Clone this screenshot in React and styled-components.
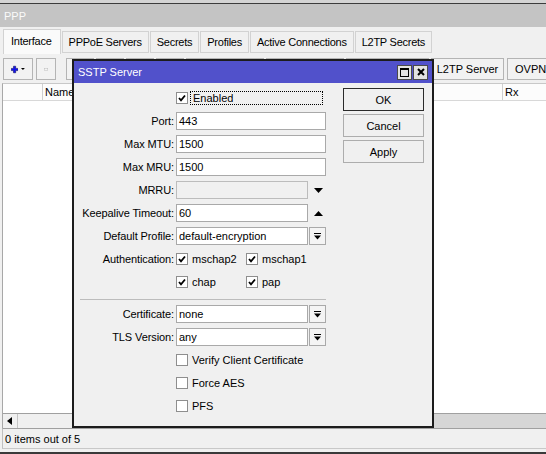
import React from 'react';
import styled, { createGlobalStyle } from 'styled-components';

const Global = createGlobalStyle`
  html, body { margin: 0; padding: 0; }
  body {
    font-family: "Liberation Sans", Arial, sans-serif;
    font-size: 11px;
    color: #000;
    background: #f0f0f0;
  }
  #root { width: 546px; height: 454px; }
`;

const Window = styled.div`
  position: relative;
  width: 546px;
  height: 454px;
  overflow: hidden;
  display: flex;
  flex-direction: column;
  background: #f0f0f0;
`;

const TopEdge = styled.div`
  flex: none;
  height: 3px;
  background: #d4d4d4;
  border-bottom: 1px solid #3c3c3c;
`;

const WinTitle = styled.div`
  flex: none;
  height: 23px;
  background: #c4c4c4;
  color: #fafafa;
  display: flex;
  align-items: center;
  padding-left: 4px;
`;

const TabRow = styled.div`
  flex: none;
  height: 27px;
  display: flex;
  align-items: flex-end;
  padding-left: 3px;
  gap: 1px;
  box-sizing: border-box;
`;

const Tab = styled.div`
  box-sizing: border-box;
  height: ${p => (p.$active ? '25px' : '22px')};
  margin-bottom: ${p => (p.$active ? '0' : '1px')};
  padding: ${p => (p.$active ? '0 8px 2px 7px' : '0 6px')};
  display: flex;
  align-items: center;
  border: 1px solid #d2d2d2;
  border-bottom: ${p => (p.$active ? 'none' : '1px solid #d2d2d2')};
  background: ${p => (p.$active ? '#fafafa' : '#f0f0f0')};
  letter-spacing: -0.25px;
  white-space: nowrap;
`;

const Toolbar = styled.div`
  flex: none;
  height: 29px;
  box-sizing: border-box;
  padding: 4px 0 0 3px;
  display: flex;
  align-items: flex-start;
  gap: 2px;
  white-space: nowrap;
`;

const ToolButton = styled.div`
  flex: none;
  box-sizing: border-box;
  height: 22px;
  width: ${p => (p.$w ? `${p.$w}px` : 'auto')};
  margin-left: ${p => p.$ml || 0}px;
  padding: 0 7px;
  border: 1px solid #b4b4b4;
  background: #f2f2f2;
  display: flex;
  align-items: center;
  justify-content: center;
  gap: 3px;
`;

const ListPanel = styled.div`
  flex: 1;
  display: flex;
  flex-direction: column;
  margin-left: 2px;
  border-left: 1px solid #a8a8a8;
  border-top: 1px solid #c8c8c8;
  min-height: 0;
`;

const HeaderRow = styled.div`
  flex: none;
  height: 16px;
  display: flex;
  background: #fcfcfc;
  border-bottom: 1px solid #d8d8d8;
`;

const HeadCell = styled.div`
  box-sizing: border-box;
  flex: ${p => (p.$w ? `0 0 ${p.$w}px` : '1')};
  display: flex;
  align-items: center;
  padding-left: 2px;
  border-right: ${p => (p.$last ? 'none' : '1px solid #cfcfcf')};
`;

const ListBody = styled.div`
  flex: 1;
  background: #fff;
`;

const HScroll = styled.div`
  flex: none;
  height: 14px;
  border-top: 1px solid #a0a0a0;
  background: #d6d6d6;
  display: flex;
`;

const ScrollArrow = styled.div`
  flex: 0 0 14px;
  background: #f0f0f0;
  border-right: 1px solid #c4c4c4;
  display: flex;
  align-items: center;
  justify-content: center;
`;

const ScrollThumb = styled.div`
  flex: 0 0 300px;
  background: #f0f0f0;
`;

const StatusBar = styled.div`
  flex: none;
  height: 19px;
  margin-left: 2px;
  border-top: 1px solid #a0a0a0;
  border-bottom: 1px solid #c8c8c8;
  border-left: 1px solid #c0c0c0;
  display: flex;
  align-items: center;
  padding-left: 2px;
`;

const BottomEdge = styled.div`
  flex: none;
  height: 3px;
  border-bottom: 2px solid #3a3a3a;
`;

/* ---------- dialog ---------- */

const Dialog = styled.div`
  position: absolute;
  left: 72px;
  top: 59px;
  width: 362px;
  height: 369px;
  box-sizing: border-box;
  border: 2px solid #1c1c1c;
  background: #f0f0f0;
  display: flex;
  flex-direction: column;
`;

const DialogTitle = styled.div`
  flex: none;
  height: 22px;
  background: #5151cb;
  color: #fff;
  display: flex;
  align-items: center;
  padding: 0 4px 0 4px;
`;

const TitleText = styled.span`
  flex: 1;
`;

const TitleButton = styled.div`
  box-sizing: border-box;
  width: 15px;
  height: 15px;
  margin-left: 1px;
  background: #e2e2e2;
  border: 1px solid #4a4a4a;
  display: flex;
  align-items: center;
  justify-content: center;
`;

const DialogBody = styled.div`
  flex: 1;
  display: flex;
  padding: 0 8px 0 6px;
`;

const Form = styled.div`
  width: 246px;
  padding-top: 6px;
  display: flex;
  flex-direction: column;
  gap: 5px;
`;

const Row = styled.div`
  display: grid;
  grid-template-columns: 94px 150px;
  column-gap: 2px;
  height: 18px;
  align-items: center;
`;

const Label = styled.div`
  text-align: right;
  white-space: nowrap;
  letter-spacing: -0.1px;
`;

const FieldLine = styled.div`
  display: flex;
  align-items: center;
  height: 18px;
`;

const Input = styled.div`
  box-sizing: border-box;
  height: 18px;
  width: ${p => p.$w}px;
  border: 1px solid ${p => (p.$disabled ? '#bcbcbc' : '#a9a9a9')};
  background: ${p => (p.$disabled ? '#f0f0f0' : '#fff')};
  padding-left: 2px;
  display: flex;
  align-items: center;
  white-space: nowrap;
`;

const DropButton = styled.div`
  box-sizing: border-box;
  width: 17px;
  height: 18px;
  margin-left: 1px;
  border: 1px solid #a9a9a9;
  background: #f4f4f4;
  display: flex;
  align-items: center;
  justify-content: center;
`;

const SpinArrow = styled.div`
  width: 18px;
  height: 18px;
  padding-left: 6px;
  box-sizing: border-box;
  display: flex;
  align-items: center;
`;

const CheckGroup = styled.div`
  display: flex;
  align-items: center;
`;

const CheckItem = styled.div`
  display: flex;
  align-items: center;
  width: ${p => (p.$w ? `${p.$w}px` : 'auto')};
  gap: 4px;
  white-space: nowrap;
`;

const Box = styled.div`
  box-sizing: border-box;
  width: 12px;
  height: 12px;
  border: 1px solid #8e8e8e;
  background: #fff;
  display: flex;
  align-items: center;
  justify-content: center;
  flex: none;
`;

const FocusLabel = styled.div`
  box-sizing: border-box;
  width: 133px;
  height: 14px;
  margin-left: -2px;
  padding-left: 2px;
  border: 1px dotted #000;
  display: flex;
  align-items: center;
`;

const Separator = styled.div`
  height: 1px;
  margin-top: 3px;
  background: #bcbcbc;
`;

const ButtonColumn = styled.div`
  margin-left: 17px;
  padding-top: 5px;
  width: 81px;
  display: flex;
  flex-direction: column;
  gap: 3px;
`;

const DlgButton = styled.div`
  box-sizing: border-box;
  height: 23px;
  border: 1px solid ${p => (p.$default ? '#2a2a2a' : '#adadad')};
  background: #f0f0f0;
  display: flex;
  align-items: center;
  justify-content: center;
`;

/* ---------- icons ---------- */

const CheckMark = () => (
  <svg width="8" height="8" viewBox="0 0 8 8">
    <path d="M1 4 L3 6.3 L7 1.5" fill="none" stroke="#000" strokeWidth="1.8" />
  </svg>
);

const Check = ({ on }) => <Box>{on ? <CheckMark /> : null}</Box>;

const DownTri = () => (
  <svg width="9" height="5" viewBox="0 0 9 5">
    <path d="M0 0 H9 L4.5 5 Z" fill="#000" />
  </svg>
);

const UpTri = () => (
  <svg width="9" height="5" viewBox="0 0 9 5">
    <path d="M0 5 H9 L4.5 0 Z" fill="#000" />
  </svg>
);

const ComboIcon = () => (
  <svg width="7" height="7" viewBox="0 0 7 7">
    <rect x="0" y="0" width="7" height="1" fill="#000" />
    <path d="M0 2.5 H7 L3.5 6.5 Z" fill="#000" />
  </svg>
);

const PlusIcon = () => (
  <svg width="13" height="13" viewBox="0 0 13 13">
    <path d="M4.5 0.5 H8.5 V4.5 H12.5 V8.5 H8.5 V12.5 H4.5 V8.5 H0.5 V4.5 H4.5 Z" fill="#1010f2" stroke="#00004a" strokeWidth="0.9" />
  </svg>
);

const SmallDown = () => (
  <svg width="7" height="4" viewBox="0 0 7 4">
    <path d="M0 0 H7 L3.5 4 Z" fill="#000" />
  </svg>
);

const MinusIcon = () => (
  <svg width="12" height="5" viewBox="0 0 12 5">
    <rect x="0.5" y="0.5" width="11" height="4" fill="#f4f4f4" stroke="#a8a8a8" />
  </svg>
);

const LeftTri = () => (
  <svg width="6" height="8" viewBox="0 0 6 8">
    <path d="M5 0 V8 L0 4 Z" fill="#000" />
  </svg>
);

const MaxIcon = () => (
  <svg width="9" height="9" viewBox="0 0 9 9">
    <rect x="0.5" y="1" width="8" height="7.5" fill="none" stroke="#000" />
    <rect x="0" y="0" width="9" height="2" fill="#000" />
  </svg>
);

const CloseIcon = () => (
  <svg width="8" height="8" viewBox="0 0 8 8">
    <path d="M1 1 L7 7 M7 1 L1 7" stroke="#000" strokeWidth="2" />
  </svg>
);

const tabs = ['Interface', 'PPPoE Servers', 'Secrets', 'Profiles', 'Active Connections', 'L2TP Secrets'];
const hiddenButtons = [28, 28, 28, 28, 78, 78, 83];

export default function App() {
  return (
    <>
      <Global />
      <Window>
        <TopEdge />
        <WinTitle>PPP</WinTitle>
        <TabRow>
          {tabs.map((t, i) => (
            <Tab key={t} $active={i === 0}>{t}</Tab>
          ))}
        </TabRow>
        <Toolbar>
          <ToolButton $w={30}><PlusIcon /><SmallDown /></ToolButton>
          <ToolButton $w={20} $ml={1}><MinusIcon /></ToolButton>
          {hiddenButtons.map((w, i) => (
            <ToolButton key={i} $w={w} $ml={i === 0 ? 8 : 0} />
          ))}
          <ToolButton $w={73}>L2TP Server</ToolButton>
          <ToolButton $ml={1}>OVPN Server</ToolButton>
        </Toolbar>
        <ListPanel>
          <HeaderRow>
            <HeadCell $w={40} />
            <HeadCell>Name</HeadCell>
            <HeadCell $w={43} $last>Rx</HeadCell>
          </HeaderRow>
          <ListBody />
          <HScroll>
            <ScrollArrow><LeftTri /></ScrollArrow>
            <ScrollThumb />
          </HScroll>
        </ListPanel>
        <StatusBar>0 items out of 5</StatusBar>
        <BottomEdge />

        <Dialog>
          <DialogTitle>
            <TitleText>SSTP Server</TitleText>
            <TitleButton><MaxIcon /></TitleButton>
            <TitleButton><CloseIcon /></TitleButton>
          </DialogTitle>
          <DialogBody>
            <Form>
              <Row>
                <Label />
                <CheckItem>
                  <Check on />
                  <FocusLabel>Enabled</FocusLabel>
                </CheckItem>
              </Row>
              <Row>
                <Label>Port:</Label>
                <Input $w={150}>443</Input>
              </Row>
              <Row>
                <Label>Max MTU:</Label>
                <Input $w={150}>1500</Input>
              </Row>
              <Row>
                <Label>Max MRU:</Label>
                <Input $w={150}>1500</Input>
              </Row>
              <Row>
                <Label>MRRU:</Label>
                <FieldLine>
                  <Input $w={132} $disabled />
                  <SpinArrow><DownTri /></SpinArrow>
                </FieldLine>
              </Row>
              <Row>
                <Label>Keepalive Timeout:</Label>
                <FieldLine>
                  <Input $w={132}>60</Input>
                  <SpinArrow><UpTri /></SpinArrow>
                </FieldLine>
              </Row>
              <Row>
                <Label>Default Profile:</Label>
                <FieldLine>
                  <Input $w={132}>default-encryption</Input>
                  <DropButton><ComboIcon /></DropButton>
                </FieldLine>
              </Row>
              <Row>
                <Label>Authentication:</Label>
                <CheckGroup>
                  <CheckItem $w={70}><Check on />mschap2</CheckItem>
                  <CheckItem $w={70}><Check on />mschap1</CheckItem>
                </CheckGroup>
              </Row>
              <Row>
                <Label />
                <CheckGroup>
                  <CheckItem $w={70}><Check on />chap</CheckItem>
                  <CheckItem $w={70}><Check on />pap</CheckItem>
                </CheckGroup>
              </Row>
              <Separator />
              <Row>
                <Label>Certificate:</Label>
                <FieldLine>
                  <Input $w={132}>none</Input>
                  <DropButton><ComboIcon /></DropButton>
                </FieldLine>
              </Row>
              <Row>
                <Label>TLS Version:</Label>
                <FieldLine>
                  <Input $w={132}>any</Input>
                  <DropButton><ComboIcon /></DropButton>
                </FieldLine>
              </Row>
              <Row>
                <Label />
                <CheckItem><Check />Verify Client Certificate</CheckItem>
              </Row>
              <Row>
                <Label />
                <CheckItem><Check />Force AES</CheckItem>
              </Row>
              <Row>
                <Label />
                <CheckItem><Check />PFS</CheckItem>
              </Row>
            </Form>
            <ButtonColumn>
              <DlgButton $default>OK</DlgButton>
              <DlgButton>Cancel</DlgButton>
              <DlgButton>Apply</DlgButton>
            </ButtonColumn>
          </DialogBody>
        </Dialog>
      </Window>
    </>
  );
}
